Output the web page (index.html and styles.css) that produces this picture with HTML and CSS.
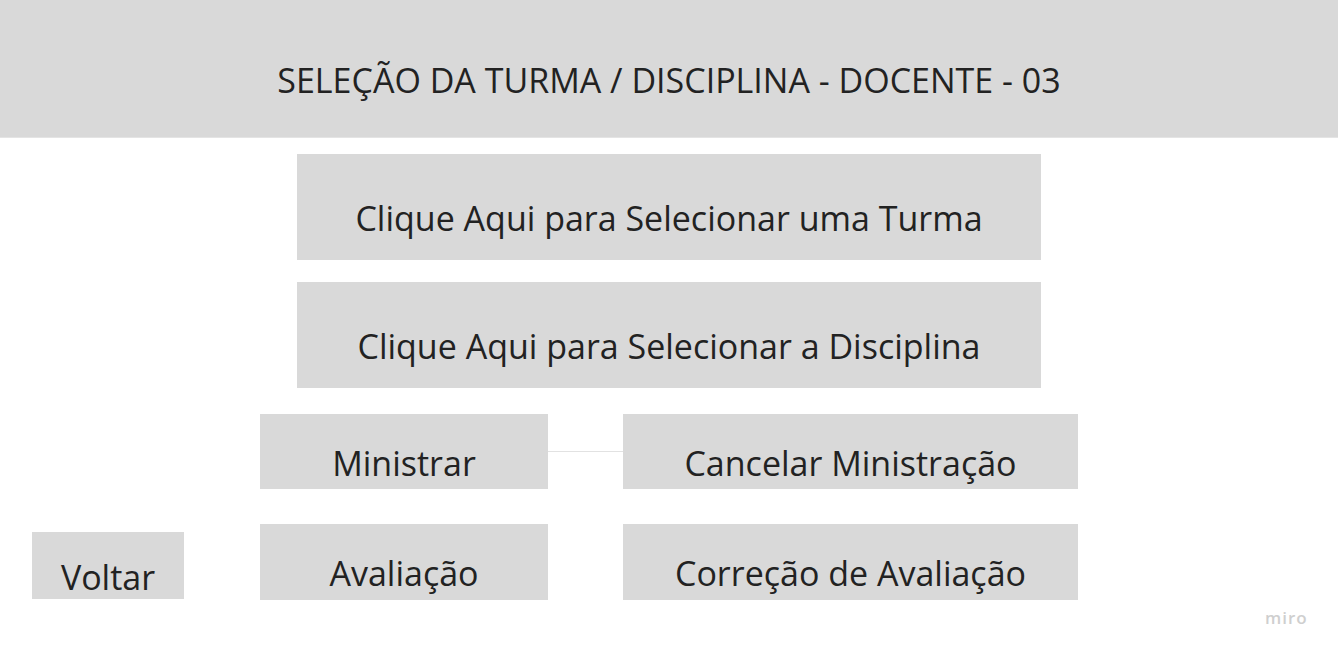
FILE: index.html
```html
<!DOCTYPE html>
<html lang="pt">
<head>
<meta charset="utf-8">
<title>Seleção da Turma</title>
<link rel="stylesheet" href="styles.css">
</head>
<body>
<header class="header"><span>SELEÇÃO DA TURMA / DISCIPLINA - DOCENTE - 03</span></header>
<main class="board">
  <div class="box select first">Clique Aqui para Selecionar uma Turma</div>
  <div class="box select second">Clique Aqui para Selecionar a Disciplina</div>
  <div class="row row-actions">
    <div class="box small">Ministrar</div>
    <div class="connector"></div>
    <div class="box wide">Cancelar Ministração</div>
  </div>
  <div class="row row-bottom">
    <div class="box back">Voltar</div>
    <div class="box small tall">Avaliação</div>
    <div class="spacer"></div>
    <div class="box wide tall">Correção de Avaliação</div>
  </div>
</main>
<div class="miro">miro</div>
</body>
</html>
```
FILE: styles.css
```css
html, body {
  margin: 0;
  padding: 0;
  background: #ffffff;
  width: 1338px;
  height: 656px;
  overflow: hidden;
  font-family: "Open Sans", "Liberation Sans", sans-serif;
  font-weight: 400;
  color: #222222;
}

.header {
  height: 138px;
  background: #d9d9d9;
  display: flex;
  align-items: center;
  justify-content: center;
  padding-top: 22px;
  box-sizing: border-box;
  font-size: 34px;
  border-bottom: 1px solid #e4e4e4;
}

.board {
  display: flex;
  flex-direction: column;
}

.box {
  background: #d9d9d9;
  display: flex;
  align-items: center;
  justify-content: center;
  padding-top: 22px;
  box-sizing: border-box;
  font-size: 34px;
  white-space: nowrap;
}

.select {
  margin-left: 297px;
  width: 744px;
  height: 106px;
}

.first { margin-top: 16px; }
.second { margin-top: 22px; }

.row {
  display: flex;
}

.row-actions {
  margin-top: 26px;
  margin-left: 260px;
  height: 75px;
}

.small { width: 288px; height: 75px; }
.wide { width: 455px; height: 75px; }
.tall { height: 76px; }

.connector {
  width: 75px;
  height: 1px;
  align-self: center;
  background: #e2e2e2;
}

.row-bottom {
  margin-top: 35px;
  margin-left: 32px;
}

.back {
  width: 152px;
  height: 67px;
  margin-top: 8px;
  margin-right: 76px;
}

.spacer { width: 75px; }

.miro {
  position: absolute;
  left: 1265px;
  top: 606px;
  font-size: 17px;
  font-weight: 600;
  letter-spacing: 1px;
  color: #cfcfcf;
}
```
